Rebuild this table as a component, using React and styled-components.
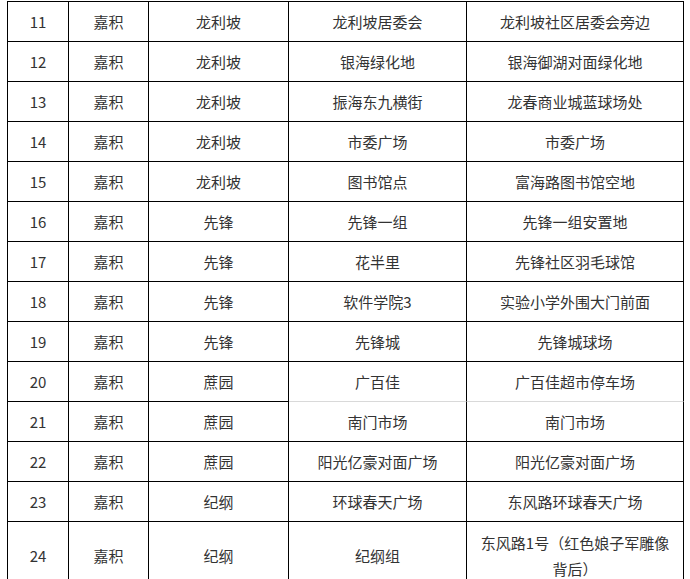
import React from "react";
import styled, { createGlobalStyle } from "styled-components";

const Global = createGlobalStyle`
  html, body { margin: 0; padding: 0; background: #fff; }
  body { font-family: "Noto Sans CJK SC", "Noto Sans", sans-serif; }
`;

const Page = styled.div`
  padding: 1px 0 0 7px;
  width: 690px;
  height: 579px;
  box-sizing: border-box;
  overflow: hidden;
`;

const Table = styled.div`
  display: grid;
  grid-template-columns: 61px 80px 140px 178px 217px;
  width: max-content;
  border-left: 1px solid #000;
  border-top: 1px solid #000;
`;

const Cell = styled.div`
  box-sizing: border-box;
  height: ${(p) => (p.$tall ? 68 : 40)}px;
  border-right: 1px solid #000;
  border-bottom: 1px solid ${(p) => (p.$soft ? "#d9d9d9" : "#000")};
  display: flex;
  align-items: center;
  justify-content: center;
  text-align: center;
  padding: 0 10px;
  font-size: 15px;
  line-height: 26px;
  color: #333;
`;

const rows = [
  ["11", "嘉积", "龙利坡", "龙利坡居委会", "龙利坡社区居委会旁边"],
  ["12", "嘉积", "龙利坡", "银海绿化地", "银海御湖对面绿化地"],
  ["13", "嘉积", "龙利坡", "振海东九横街", "龙春商业城蓝球场处"],
  ["14", "嘉积", "龙利坡", "市委广场", "市委广场"],
  ["15", "嘉积", "龙利坡", "图书馆点", "富海路图书馆空地"],
  ["16", "嘉积", "先锋", "先锋一组", "先锋一组安置地"],
  ["17", "嘉积", "先锋", "花半里", "先锋社区羽毛球馆"],
  ["18", "嘉积", "先锋", "软件学院3", "实验小学外围大门前面"],
  ["19", "嘉积", "先锋", "先锋城", "先锋城球场"],
  ["20", "嘉积", "蔗园", "广百佳", "广百佳超市停车场"],
  ["21", "嘉积", "蔗园", "南门市场", "南门市场"],
  ["22", "嘉积", "蔗园", "阳光亿豪对面广场", "阳光亿豪对面广场"],
  ["23", "嘉积", "纪纲", "环球春天广场", "东风路环球春天广场"],
  ["24", "嘉积", "纪纲", "纪纲组", "东风路1号（红色娘子军雕像背后）"],
];

export default function App() {
  return (
    <Page>
      <Global />
      <Table>
        {rows.map((r) =>
          r.map((c, i) => (
            <Cell
              key={r[0] + "-" + i}
              $tall={r[0] === "24"}
              $soft={r[0] === "20" && i >= 3}
            >
              {c}
            </Cell>
          ))
        )}
      </Table>
    </Page>
  );
}
